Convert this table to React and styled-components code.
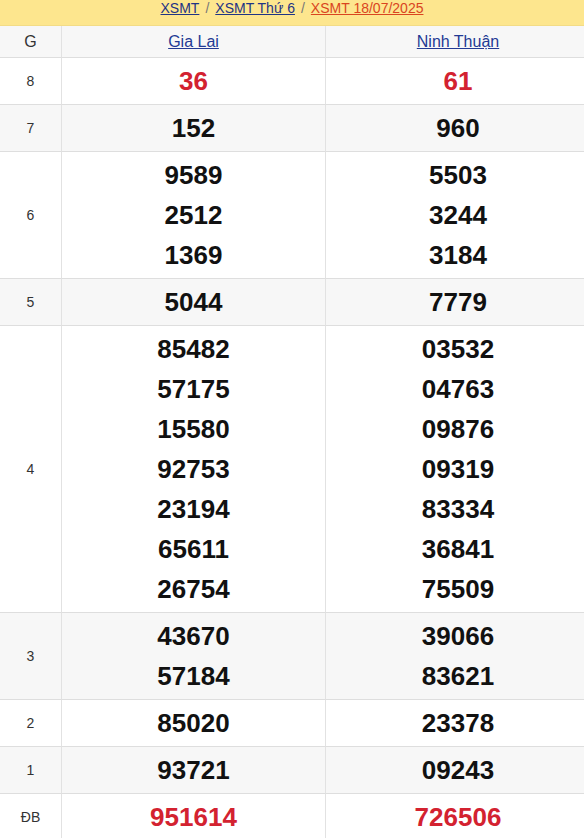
import React from 'react'
import styled, { createGlobalStyle } from 'styled-components'

const Global = createGlobalStyle`
  html, body { margin: 0; padding: 0; background: #fff; }
  body { font-family: "Liberation Sans", Arial, sans-serif; }
`

const Page = styled.div`
  width: 584px;
  overflow: hidden;
`

const Crumbs = styled.div`
  height: 26px;
  background: #fde68e;
  border-bottom: 1px solid #f3dc86;
  box-sizing: border-box;
  display: flex;
  justify-content: center;
  align-items: flex-start;
  gap: 6px;
  font-size: 14px;
  line-height: 16px;
  color: #777;
`

const Crumb = styled.a`
  color: ${p => (p.$active ? '#d9451f' : '#1f3485')};
  text-decoration: underline;
`

const Table = styled.div`
  display: grid;
  grid-template-columns: 61px 264px 1fr;
  width: 590px;
`

const Row = styled.div`
  display: contents;
  & > div {
    background: ${p => (p.$alt ? '#f7f7f7' : '#fff')};
  }
`

const Cell = styled.div`
  border-bottom: 1px solid #dedede;
  border-left: ${p => (p.$first ? 'none' : '1px solid #e2e2e2')};
  display: flex;
  flex-direction: column;
  align-items: center;
  justify-content: center;
  padding: 3px 0 3px;
`

const HeadCell = styled(Cell)`
  height: 32px;
  padding: 1px 0 0;
  box-sizing: border-box;
  font-size: 16px;
  color: #333;
`

const ProvLink = styled.a`
  color: #233a94;
  text-decoration: underline;
`

const Label = styled.span`
  font-size: 14px;
  color: #333;
`

const Num = styled.span`
  font-size: 26px;
  line-height: 40px;
  font-weight: bold;
  color: ${p => (p.$red ? '#d32230' : '#111')};
`

const rows = [
  { g: '8', a: ['36'], b: ['61'], red: true },
  { g: '7', a: ['152'], b: ['960'] },
  { g: '6', a: ['9589', '2512', '1369'], b: ['5503', '3244', '3184'] },
  { g: '5', a: ['5044'], b: ['7779'] },
  {
    g: '4',
    a: ['85482', '57175', '15580', '92753', '23194', '65611', '26754'],
    b: ['03532', '04763', '09876', '09319', '83334', '36841', '75509'],
  },
  { g: '3', a: ['43670', '57184'], b: ['39066', '83621'] },
  { g: '2', a: ['85020'], b: ['23378'] },
  { g: '1', a: ['93721'], b: ['09243'] },
  { g: 'ĐB', a: ['951614'], b: ['726506'], red: true },
]

export default function App() {
  return (
    <Page>
      <Global />
      <Crumbs>
        <Crumb href="#">XSMT</Crumb>/
        <Crumb href="#">XSMT Thứ 6</Crumb>/
        <Crumb href="#" $active>XSMT 18/07/2025</Crumb>
      </Crumbs>
      <Table>
        <Row $alt>
          <HeadCell $first>G</HeadCell>
          <HeadCell><ProvLink href="#">Gia Lai</ProvLink></HeadCell>
          <HeadCell><ProvLink href="#">Ninh Thuận</ProvLink></HeadCell>
        </Row>
        {rows.map((r, i) => (
          <Row key={r.g} $alt={i % 2 === 1}>
            <Cell $first><Label>{r.g}</Label></Cell>
            <Cell>{r.a.map((n, j) => <Num key={j} $red={r.red}>{n}</Num>)}</Cell>
            <Cell>{r.b.map((n, j) => <Num key={j} $red={r.red}>{n}</Num>)}</Cell>
          </Row>
        ))}
      </Table>
    </Page>
  )
}
